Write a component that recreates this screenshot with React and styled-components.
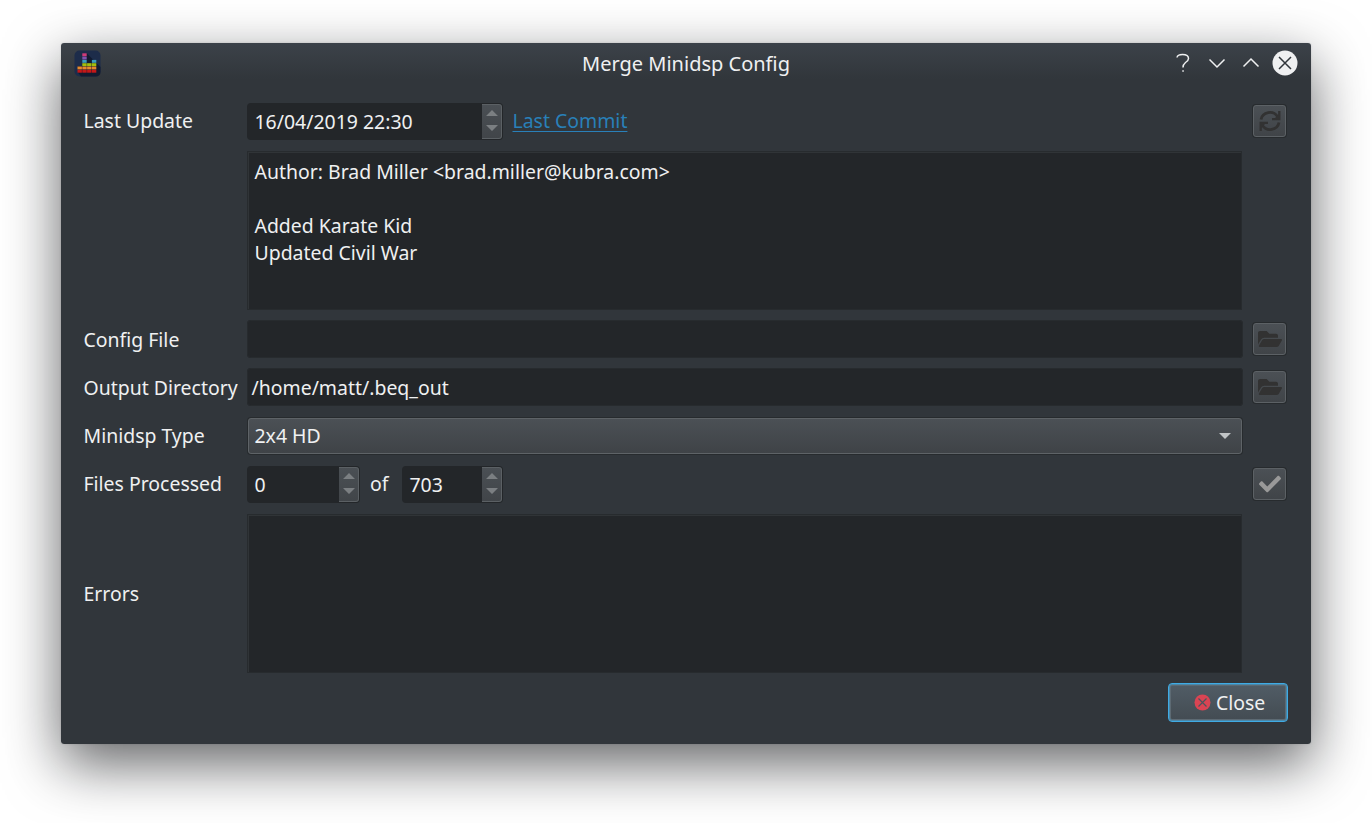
import React from 'react';
import styled, { createGlobalStyle } from 'styled-components';
import { FaFolderOpen, FaCheck } from 'react-icons/fa';

const Global = createGlobalStyle`
  * { box-sizing: border-box; }
  body { margin: 0; background: #fff; overflow: hidden; }
`;
const Desktop = styled.div`
  height: 823px;
  padding: 43px 61px 0;
  overflow: hidden;
  font: 20px/27px "Noto Sans", sans-serif;
  color: #eff0f1;
`;
const Window = styled.main`
  width: 1250px;
  height: 701px;
  border-radius: 3px;
  background: linear-gradient(#3c4249 0, #31363b 36px);
  box-shadow: 0 20px 56px rgba(8, 10, 12, 0.63), 0 0 2px rgba(0, 0, 0, 0.15);
`;
const TitleBar = styled.header`
  display: grid;
  grid-template-columns: 136px 1fr 136px;
  align-items: center;
  height: 40px;
  padding: 0 13px;
`;
const Title = styled.h1`
  margin: 1px 0 0;
  font: inherit;
  text-align: center;
`;
const Controls = styled.div`
  display: flex;
  justify-content: flex-end;
  svg { display: block; fill: none; stroke: #eff0f1; stroke-width: 1.5; }
`;
const Form = styled.form`
  display: grid;
  grid-template-columns: 153px 996px 34px;
  grid-template-rows: 38px 160px 38px 38px 38px 40px 159px 39px;
  gap: 10px;
  align-items: center;
  padding: 19px 23px 0;
  font-size: 19.46px;
`;
const Label = styled.label`
  white-space: nowrap;
  margin-left: -0.5px;
  margin-bottom: ${p => p.$lift || 0}px;
`;
const Row = styled.div`
  display: flex;
  align-items: center;
`;
const TextArea = styled.div`
  align-self: stretch;
  margin: ${p => p.$top || 0}px 1px 0 0;
  padding: 6px 6.5px;
  background: #232629;
  border: 1px solid #272b2e;
  box-shadow: inset 1px 1px #303437;
  white-space: pre-line;
`;
const LineEdit = styled.div`
  height: 38px;
  padding: 6px 4.5px 5px;
  border-radius: 4px;
  background: #232629;
  box-shadow: inset 0 0 0 1px #272b2e;
`;
const SpinBox = styled.div`
  display: flex;
  justify-content: space-between;
  width: ${p => p.$width}px;
  height: 37px;
  margin-left: ${p => p.$before || 0}px;
  margin-right: ${p => p.$after || 0}px;
  padding: 1px 1px 1px 7.5px;
  border-radius: 4px;
  background: #232629;
  line-height: 35px;
`;
const Steps = styled.div`
  display: flex;
  align-items: center;
  justify-content: center;
  width: 20px;
  height: 35px;
  border: 1px solid #5b6064;
  border-left: 0;
  border-radius: 0 3px 3px 0;
  background: linear-gradient(#4a4f54, #414549);
  svg { fill: #7b7f82; }
`;
const Link = styled.a`
  margin-left: 9.5px;
  margin-bottom: 2px;
  color: #2980b9;
  text-decoration: underline;
  text-decoration-thickness: 1px;
  text-underline-offset: 3px;
`;
const Combo = styled.div`
  display: flex;
  align-items: center;
  justify-content: space-between;
  height: 36px;
  margin: 1px 1px 0 1px;
  padding: 0 10px 1px 5.5px;
  border: 1px solid #5e6367;
  border-radius: 3px;
  background: linear-gradient(#4b5055, #3f4347);
  box-shadow: 0 0 0 1px #272b2e;
  svg { fill: #c0c3c5; margin-top: 1px; }
`;
const ToolButton = styled.button`
  display: flex;
  align-items: center;
  justify-content: center;
  width: 33px;
  height: 32px;
  margin: 0 0 ${p => p.$lift || 0}px 0;
  padding: 0;
  border: 1px solid #5c6165;
  border-radius: 3px;
  background: linear-gradient(#4b5055, #404448);
  box-shadow: 0 0 0 1px #272b2e;
  color: ${p => p.$color || '#323232'};
`;
const Footer = styled.footer`
  grid-column: 1 / -1;
  display: flex;
  justify-content: flex-end;
  margin-right: -1px;
`;
const CloseButton = styled.button`
  display: flex;
  align-items: center;
  gap: 5px;
  width: 120px;
  height: 39px;
  padding: 0 0 0 25px;
  border: 1px solid #3fabe4;
  border-radius: 4px;
  background: linear-gradient(#515d66, #434b52);
  box-shadow: inset 0 0 0 1px #4a87a8, inset 0 0 0 2px #5d6a73;
  color: inherit;
  font: inherit;
`;

const BARS = [
  [3.5, ['#c41718', '#e8892b']],
  [8.3, ['#c41718', '#e8892b', '#a3be0c', '#3a9cba', '#7f52b0', '#cf3a78']],
  [13.1, ['#c41718', '#e8892b', '#a3be0c']],
  [17.9, ['#c41718', '#e8892b', '#a3be0c', '#3a9cba']],
];

function AppIcon() {
  return (
    <svg width="28" height="28" viewBox="0 0 28 28">
      <rect x="0.5" y="1.500" width="26" height="26" rx="5" fill="#1d2c4a" />
      <path d="M12.500 4l14 14v4.500q0 5-5 5H7l-3-4V17h5z" fill="#121b30" />
      {BARS.map(([x, cells]) => cells.map((c, i) => (
        <rect key={x + '-' + i} x={x} y={20.8 - i * 3.3} width="4.4" height="2.9" fill={c} />
      )))}
    </svg>
  );
}
const RefreshIcon = () => (
  <svg width="22" height="22" viewBox="0 0 22 22" fill="none" stroke="currentColor" strokeWidth="2.800">
    <path d="M2 9.500A9 8.600 0 0 1 18.500 6.500M20 12.500A9 8.600 0 0 1 3.500 15.500" />
    <path d="M20.300 1v8.200h-7.300M1.700 21v-8.200H9" strokeWidth="2.300" />
    <path d="M20 4v5h-5zM2 18v-5h5z" fill="currentColor" stroke="none" />
  </svg>
);
const Spinner = () => (
  <Steps>
    <svg width="12" height="22" viewBox="0 0 12 22"><path d="M0 6l6-6 6 6zM0 15h12l-6 6z" /></svg>
  </Steps>
);

export default function App() {
  return (
    <>
      <Global />
      <Desktop>
        <Window>
          <TitleBar>
            <AppIcon />
            <Title>Merge Minidsp Config</Title>
            <Controls>
              <svg width="34" height="28" viewBox="0 0 34 28"><path d="M11 8.500Q11.500 5.500 16.500 5.500Q22.500 5.500 22.500 9.500Q22.500 11.500 19.500 13.500Q17 15.500 17 18.500M16.300 22h1.500" /></svg>
              <svg width="34" height="28" viewBox="0 0 34 28"><path d="M9.500 10.500L17 18l7.500-7.500" /></svg>
              <svg width="34" height="28" viewBox="0 0 34 28"><path d="M9.500 17.500L17 10l7.500 7.500" /></svg>
              <svg width="30" height="28" viewBox="0 0 30 28"><circle cx="17" cy="14" r="12.500" fill="#eff0f1" stroke="none" /><path d="M11 8l12 12M23 8L11 20" stroke="#31363b" /></svg>
            </Controls>
          </TitleBar>
          <Form>
            <Label $lift={2}>Last Update</Label>
            <Row>
              <SpinBox $width={256}>16/04/2019 22:30<Spinner /></SpinBox>
              <Link>Last Commit</Link>
            </Row>
            <ToolButton type="button"><RefreshIcon /></ToolButton>

            <span />
            <TextArea $top={1}>{'Author: Brad Miller <brad.miller@kubra.com>\n\nAdded Karate Kid\nUpdated Civil War'}</TextArea>
            <span />

            <Label>Config File</Label>
            <LineEdit />
            <ToolButton type="button" $lift={1}><FaFolderOpen size={24} /></ToolButton>

            <Label>Output Directory</Label>
            <LineEdit>/home/matt/.beq_out</LineEdit>
            <ToolButton type="button" $lift={1}><FaFolderOpen size={24} /></ToolButton>

            <Label>Minidsp Type</Label>
            <Combo>2x4 HD<svg width="12" height="6" viewBox="0 0 12 6"><path d="M0 0h12L6 6z" /></svg></Combo>
            <span />

            <Label $lift={1}>Files Processed</Label>
            <Row>
              <SpinBox $width={113} $after={10.5}>0<Spinner /></SpinBox>
              <Label $lift={1}>of</Label>
              <SpinBox $width={101.5} $before={13.5}>703<Spinner /></SpinBox>
            </Row>
            <ToolButton type="button" $color="#999"><FaCheck size={22} /></ToolButton>

            <Label>Errors</Label>
            <TextArea />
            <span />

            <Footer>
              <CloseButton type="button">
                <svg width="17" height="17" viewBox="0 0 17 17"><circle cx="8.500" cy="8.500" r="8" fill="#da4453" /><path d="M4.500 4.500l8 8m0-8l-8 8" stroke="#4b555d" strokeWidth="1.200" /></svg>
                Close
              </CloseButton>
            </Footer>
          </Form>
        </Window>
      </Desktop>
    </>
  );
}
